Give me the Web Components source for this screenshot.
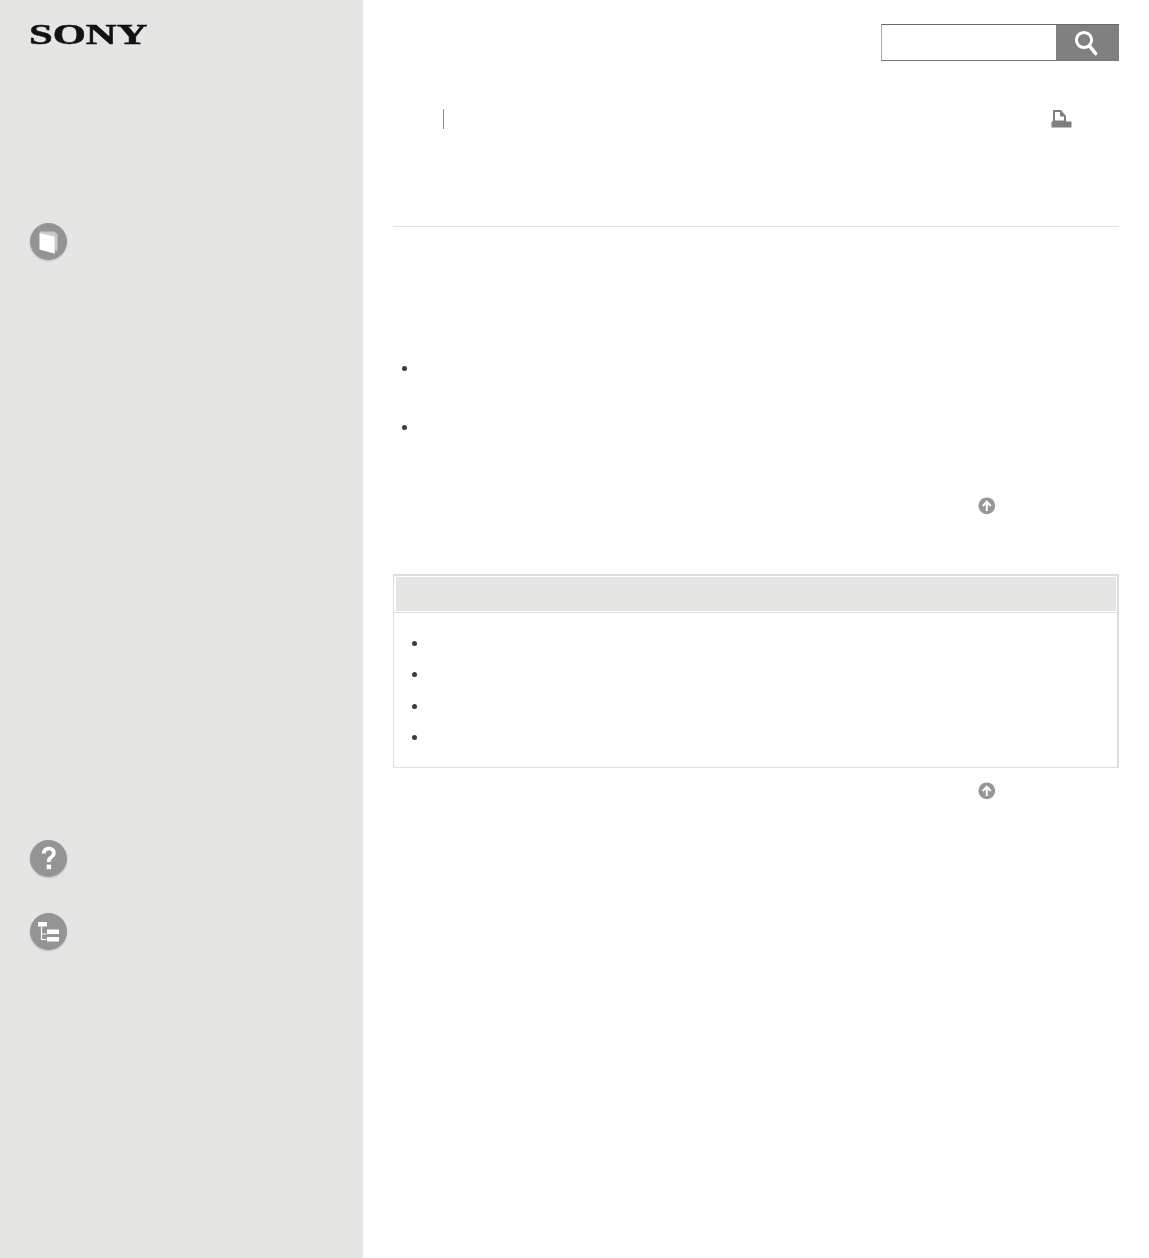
<!DOCTYPE html>
<html lang="en">
<head>
<meta charset="utf-8">
<title>Help Guide</title>
<style>
  html, body { margin: 0; padding: 0; background: #fff; }
</style>
</head>
<body>
<help-page>
  <side-bar slot="side">
    <sony-logo></sony-logo>
    <nav-icon style="--top:179px">
      <svg viewBox="0 0 37 37" width="37" height="37"><path d="M10 8.5 L24 8.5 L27.5 11 L27.5 28.5 L25 27 L25 30.5 L10 26.5 Z" fill="#fff" opacity=".5"/><path d="M9.5 10 L24.5 13.5 L24.5 30.5 L9.5 26.5 Z" fill="#fff"/></svg>
    </nav-icon>
    <nav-icon style="--top:580px">
      <svg viewBox="0 0 37 37" width="37" height="37"><path d="M11.8 13.5 C12 9.2 15 6.8 18.9 6.8 C22.9 6.8 25.8 9.2 25.8 12.8 C25.8 15.6 24.3 17 22.4 18.4 C21 19.4 20.7 20.1 20.7 22 L16.9 22 C16.9 19 17.6 17.6 19.6 16.2 C21 15.2 21.9 14.5 21.9 13 C21.9 11.4 20.7 10.3 18.9 10.3 C17 10.3 15.9 11.6 15.7 13.5 Z" fill="#fff"/><rect x="16.7" y="24.6" width="4.4" height="4.6" fill="#fff"/></svg>
    </nav-icon>
    <nav-icon style="--top:36px">
      <svg viewBox="0 0 37 37" width="37" height="37"><rect x="8" y="9" width="9" height="4.5" fill="#fff"/><path d="M11.5 13.5 V26.5 H16.5 M11.5 21 H16.5" fill="none" stroke="#fff" stroke-width="1.2"/><rect x="17" y="16.5" width="12" height="4.5" fill="#fff"/><rect x="17" y="24" width="12" height="4.5" fill="#fff"/></svg>
    </nav-icon>
  </side-bar>

  <search-box></search-box>
  <tool-bar></tool-bar>
  <bullet-list style="--top:139px;--row:59px;--left:9px">
    <i></i><i></i>
  </bullet-list>
  <top-link style="--top:67px"></top-link>
  <related-box></related-box>
  <top-link style="--top:14px"></top-link>
</help-page>

<script>
  class HelpPage extends HTMLElement {
    constructor() {
      super();
      this.attachShadow({ mode: "open" }).innerHTML = `
        <style>
          :host { display: flex; width: 100%; min-height: 1258px; }
          .side { flex: 0 0 363px; background: #e5e5e4; }
          main { flex: 1; min-width: 0; padding: 24px 30px 0; }
        </style>
        <div class="side"><slot name="side"></slot></div>
        <main><slot></slot></main>`;
    }
  }

  class SideBar extends HTMLElement {
    constructor() {
      super();
      this.attachShadow({ mode: "open" }).innerHTML = `
        <style>
          :host { display: block; padding: 25px 0 0 30px; }
        </style>
        <slot></slot>`;
    }
  }

  class SonyLogo extends HTMLElement {
    constructor() {
      super();
      this.attachShadow({ mode: "open" }).innerHTML = `
        <style>
          :host { display: block; height: 19px; width: 117px; overflow: visible; }
          span {
            display: block;
            margin-left: -1px;
            font: 700 29px/19px "Liberation Serif", serif;
            color: #111;
            white-space: nowrap;
            -webkit-text-stroke: .5px #111;
            transform-origin: 0 0;
            transform: scaleX(1.47);
          }
        </style>
        <span>SONY</span>`;
    }
  }

  class NavIcon extends HTMLElement {
    constructor() {
      super();
      this.attachShadow({ mode: "open" }).innerHTML = `
        <style>
          :host {
            display: flex;
            width: 37px;
            height: 37px;
            margin-top: var(--top, 0);
            border-radius: 50%;
            background: #949494;
            box-shadow: 0 1px 2px rgba(0, 0, 0, .18);
          }
          ::slotted(svg) { filter: blur(.35px); }
        </style>
        <slot></slot>`;
    }
  }

  class SearchBox extends HTMLElement {
    constructor() {
      super();
      this.attachShadow({ mode: "open" }).innerHTML = `
        <style>
          :host { display: flex; justify-content: flex-end; }
          .field {
            box-sizing: border-box;
            width: 175px;
            height: 37px;
            background: #fff;
            border-top: 1px solid #666;
            border-bottom: 1px solid #777;
            border-left: 1px solid #aaa;
          }
          button {
            display: flex;
            align-items: center;
            justify-content: center;
            width: 63px;
            height: 37px;
            padding: 0;
            border: 0;
            border-top: 1px solid #6c6c6c;
            border-bottom: 1px solid #777;
            background: #808080;
          }
          svg { display: block; filter: blur(.4px); margin-right: 4px; }
        </style>
        <div class="field"></div>
        <button aria-label="Search">
          <svg viewBox="0 0 24 26" width="24" height="26"><circle cx="10" cy="10" r="7.6" fill="none" stroke="#fff" stroke-width="3"/><path d="M15.5 16 L21.5 23.5" stroke="#fff" stroke-width="3.6" stroke-linecap="round"/></svg>
        </button>`;
    }
  }

  class ToolBar extends HTMLElement {
    constructor() {
      super();
      this.attachShadow({ mode: "open" }).innerHTML = `
        <style>
          :host {
            display: flex;
            justify-content: space-between;
            align-items: center;
            height: 20px;
            margin-top: 48px;
            padding: 0 47px 97px 50px;
            border-bottom: 1px solid #e0e0e0;
          }
          .sep { width: 1px; height: 20px; background: #8a8a8a; }
          svg { display: block; filter: blur(.5px); }
        </style>
        <div class="sep"></div>
        <svg viewBox="0 0 21 20" width="21" height="20" aria-label="Print"><path d="M2 1 H10 L15 7 V13 H2 Z M4 3 V11.5 H13 V7.5 H9 V3 Z" fill="#7f7f7f" fill-rule="evenodd"/><rect x="0.5" y="12.5" width="20" height="6" fill="#7f7f7f"/></svg>`;
    }
  }

  class BulletList extends HTMLElement {
    constructor() {
      super();
      this.attachShadow({ mode: "open" }).innerHTML = `
        <style>
          :host {
            display: flex;
            flex-direction: column;
            gap: calc(var(--row) - 5px);
            padding: var(--top) 0 0 var(--left);
          }
          ::slotted(i) {
            display: block;
            width: 5px;
            height: 5px;
            border-radius: 50%;
            background: #3c3c3c;
          }
        </style>
        <slot></slot>`;
    }
  }

  class TopLink extends HTMLElement {
    constructor() {
      super();
      this.attachShadow({ mode: "open" }).innerHTML = `
        <style>
          :host { display: block; padding: var(--top) 0 0 585px; height: 18px; }
          svg { display: block; filter: blur(.5px); }
        </style>
        <svg viewBox="0 0 18 18" width="18" height="18" aria-label="Go to page top"><circle cx="8.8" cy="8.8" r="8.4" fill="#969696"/><path d="M8.8 14 V5 M4.8 9 L8.8 4.8 L12.8 9" fill="none" stroke="#fff" stroke-width="2"/></svg>`;
    }
  }

  class RelatedBox extends HTMLElement {
    constructor() {
      super();
      this.attachShadow({ mode: "open" }).innerHTML = `
        <style>
          :host {
            display: block;
            box-sizing: border-box;
            height: 194px;
            margin-top: 59px;
            border: solid #dedede;
            border-width: 2px 2px 1px 1px;
          }
          header {
            height: 34px;
            margin: 1px 1px 0 2px;
            background: #e5e5e4;
          }
          .rule { height: 1px; margin-top: 1px; background: #dedede; }
        </style>
        <header></header>
        <div class="rule"></div>
        <bullet-list style="--top:28px;--row:31.4px;--left:18px">
          <i></i><i></i><i></i><i></i>
        </bullet-list>`;
    }
  }

  customElements.define("help-page", HelpPage);
  customElements.define("side-bar", SideBar);
  customElements.define("sony-logo", SonyLogo);
  customElements.define("nav-icon", NavIcon);
  customElements.define("search-box", SearchBox);
  customElements.define("tool-bar", ToolBar);
  customElements.define("bullet-list", BulletList);
  customElements.define("top-link", TopLink);
  customElements.define("related-box", RelatedBox);
</script>
</body>
</html>
